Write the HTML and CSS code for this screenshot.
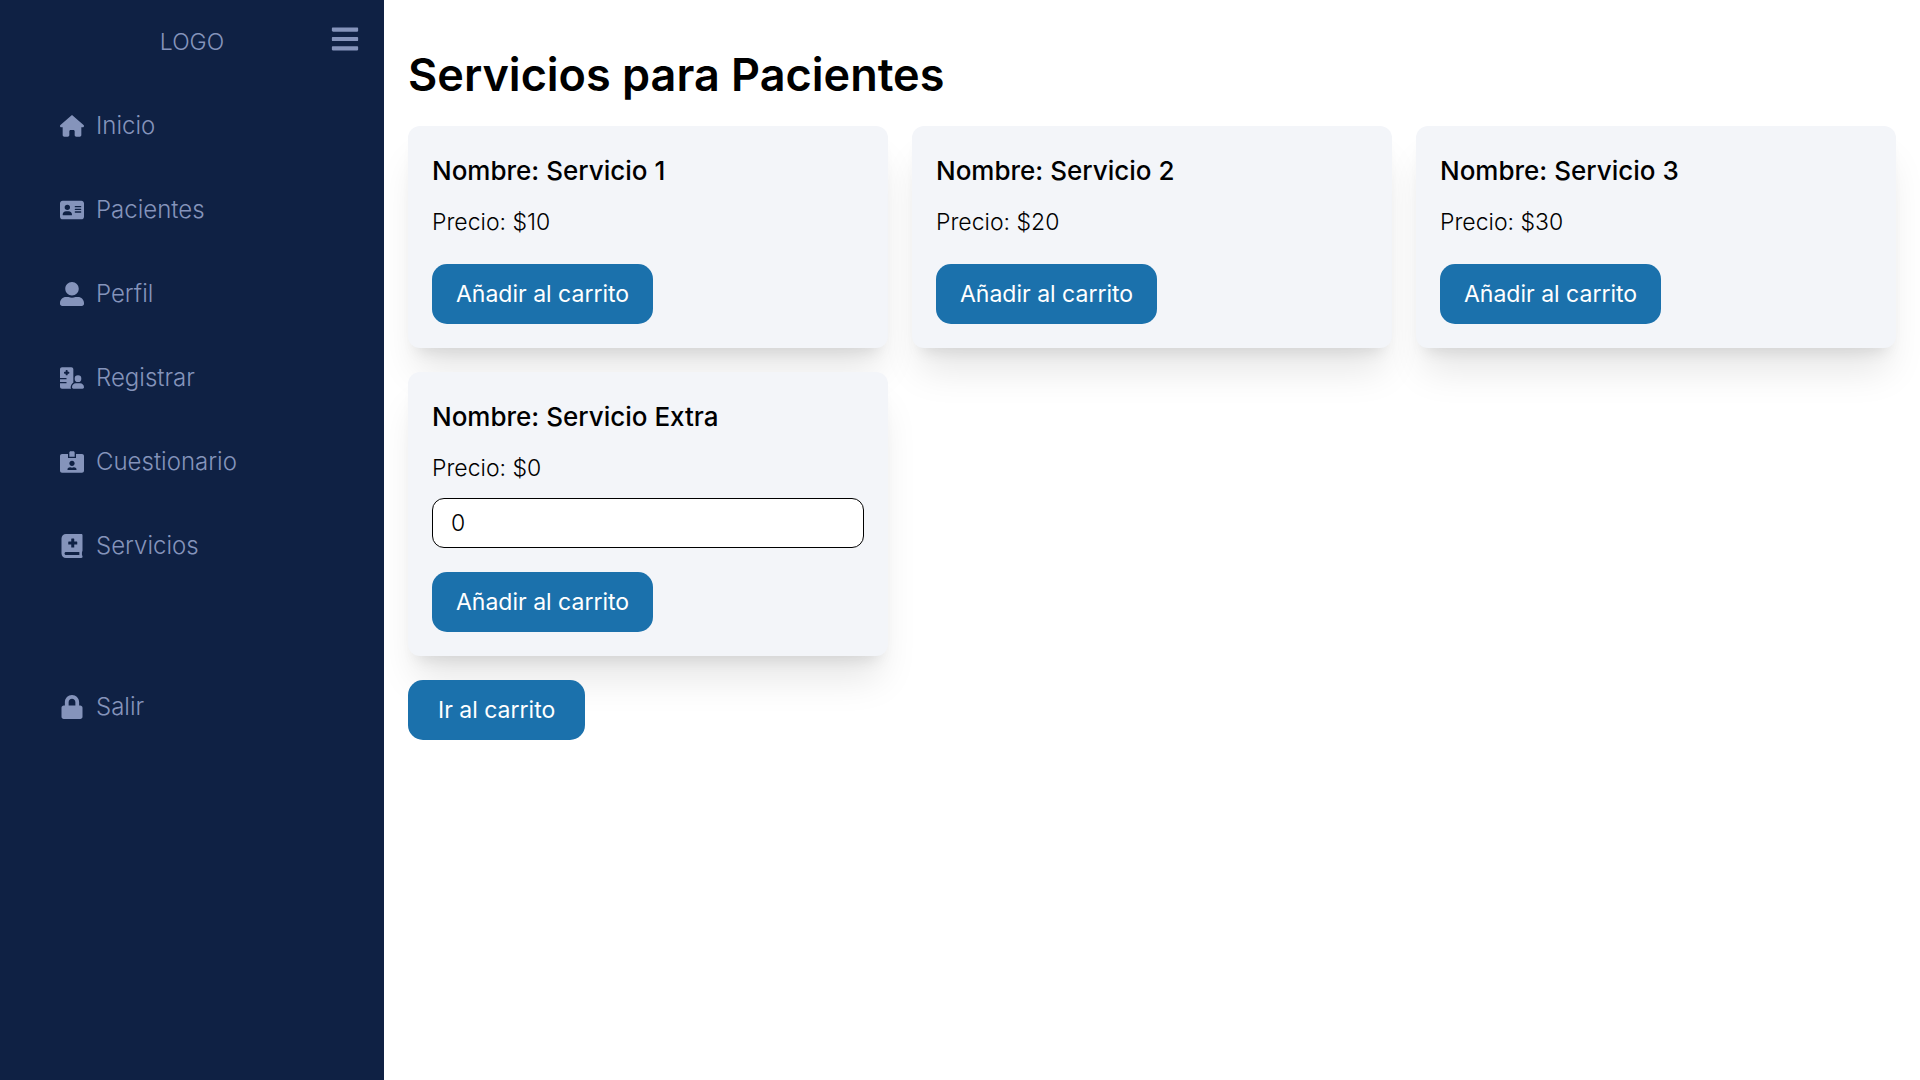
FILE: index.html
```html
<!DOCTYPE html>
<html lang="es">
<head>
  <meta charset="utf-8">
  <meta name="viewport" content="width=device-width, initial-scale=1">
  <title>Servicios para Pacientes</title>
  <link rel="stylesheet" href="styles.css">
</head>
<body>
  <div class="layout">
    <aside class="sidebar">
      <header class="sidebar-header">
        <span class="logo">LOGO</span>
        <button class="menu-toggle" type="button" aria-label="Menú">
          <svg class="menu-icon" viewBox="0 0 448 512" aria-hidden="true"><path d="M16 132h416c8.837 0 16-7.163 16-16V76c0-8.837-7.163-16-16-16H16C7.163 60 0 67.163 0 76v40c0 8.837 7.163 16 16 16zm0 160h416c8.837 0 16-7.163 16-16v-40c0-8.837-7.163-16-16-16H16c-8.837 0-16 7.163-16 16v40c0 8.837 7.163 16 16 16zm0 160h416c8.837 0 16-7.163 16-16v-40c0-8.837-7.163-16-16-16H16c-8.837 0-16 7.163-16 16v40c0 8.837 7.163 16 16 16z"/></svg>
        </button>
      </header>
      <nav class="nav">
        <a class="nav-link" href="#inicio">
          <svg class="nav-icon" viewBox="0 0 576 512" aria-hidden="true"><path d="M575.8 255.5c0 18-15 32.1-32 32.1h-32l.7 160.2c0 2.7-.2 5.4-.5 8.1V472c0 22.1-17.9 40-40 40H456c-1.1 0-2.2 0-3.3-.1c-1.4 .1-2.8 .1-4.2 .1H416 392c-22.1 0-40-17.9-40-40V448 384c0-17.7-14.3-32-32-32H256c-17.7 0-32 14.3-32 32v64 24c0 22.1-17.9 40-40 40H160 128.1c-1.5 0-3-.1-4.5-.2c-1.2 .1-2.4 .2-3.6 .2H104c-22.1 0-40-17.9-40-40V360c0-.9 0-1.9 .1-2.8V287.6H32c-18 0-32-14-32-32.1c0-9 3-17 10-24L266.4 8c7-7 15-8 22-8s15 2 21 7L564.8 231.5c8 7 12 15 11 24z"/></svg>
          Inicio
        </a>
        <a class="nav-link" href="#pacientes">
          <svg class="nav-icon" viewBox="0 0 576 512" aria-hidden="true"><path d="M64 32C28.7 32 0 60.7 0 96V416c0 35.3 28.7 64 64 64H512c35.3 0 64-28.7 64-64V96c0-35.3-28.7-64-64-64H64zm80 256h64c44.2 0 80 35.8 80 80c0 8.8-7.2 16-16 16H80c-8.8 0-16-7.2-16-16c0-44.2 35.8-80 80-80zm-32-96a64 64 0 1 1 128 0 64 64 0 1 1 -128 0zm256-32H496c8.8 0 16 7.2 16 16s-7.2 16-16 16H368c-8.8 0-16-7.2-16-16s7.2-16 16-16zm0 64H496c8.8 0 16 7.2 16 16s-7.2 16-16 16H368c-8.8 0-16-7.2-16-16s7.2-16 16-16zm0 64H496c8.8 0 16 7.2 16 16s-7.2 16-16 16H368c-8.8 0-16-7.2-16-16s7.2-16 16-16z"/></svg>
          Pacientes
        </a>
        <a class="nav-link" href="#perfil">
          <svg class="nav-icon" viewBox="0 0 512 512" aria-hidden="true"><path d="M256 288c79.5 0 144-64.5 144-144S335.5 0 256 0 112 64.5 112 144s64.500 144 144 144zm128 32h-55.100c-22.200 10.200-46.900 16-72.900 16s-50.600-5.800-72.900-16H128C57.300 320 0 377.300 0 448v16c0 26.500 21.500 48 48 48h416c26.500 0 48-21.500 48-48v-16c0-70.700-57.300-128-128-128z"/></svg>
          Perfil
        </a>
        <a class="nav-link" href="#registrar">
          <svg class="nav-icon" viewBox="0 0 576 512" aria-hidden="true"><path d="M48 0C21.500 0 0 21.500 0 48V256H144c8.800 0 16 7.200 16 16s-7.200 16-16 16H0v64H144c8.800 0 16 7.200 16 16s-7.200 16-16 16H0v80c0 26.500 21.500 48 48 48H265.900c-6.300-10.200-9.900-22.200-9.900-35.100c0-46.900 25.800-87.800 64-109.200V271.800 48c0-26.500-21.500-48-48-48H48zM152 64h16c8.800 0 16 7.200 16 16v24h24c8.800 0 16 7.200 16 16v16c0 8.800-7.200 16-16 16H184v24c0 8.800-7.200 16-16 16H152c-8.800 0-16-7.200-16-16V152H112c-8.800 0-16-7.200-16-16V120c0-8.800 7.200-16 16-16h24V80c0-8.800 7.200-16 16-16zM512 272a80 80 0 1 0 -160 0 80 80 0 1 0 160 0zM288 477.100c0 19.300 15.600 34.900 34.900 34.900H541.100c19.300 0 34.900-15.600 34.900-34.900c0-51.400-41.700-93.100-93.100-93.100H381.100c-51.400 0-93.100 41.700-93.100 93.100z"/></svg>
          Registrar
        </a>
        <a class="nav-link" href="#cuestionario">
          <svg class="nav-icon" viewBox="0 0 576 512" aria-hidden="true"><path d="M528 64H384v96H192V64H48C21.500 64 0 85.500 0 112v352c0 26.500 21.500 48 48 48h480c26.500 0 48-21.500 48-48V112c0-26.500-21.500-48-48-48zM288 224c35.300 0 64 28.700 64 64s-28.700 64-64 64-64-28.700-64-64 28.700-64 64-64zm93.300 224H194.700c-10.400 0-18.800-10-15.600-19.800 8.300-25.600 32.400-44.200 60.900-44.200h8.200c12.300 5.100 25.700 8 39.800 8s27.600-2.900 39.800-8h8.200c28.400 0 52.500 18.500 60.900 44.200 3.200 9.900-5.200 19.800-15.600 19.800zM352 32c0-17.700-14.300-32-32-32h-64c-17.700 0-32 14.300-32 32v96h128V32z"/></svg>
          Cuestionario
        </a>
        <a class="nav-link" href="#servicios">
          <svg class="nav-icon" viewBox="0 0 448 512" aria-hidden="true"><path d="M448 358.400V25.600c0-16-9.600-25.600-25.600-25.600H96C41.600 0 0 41.600 0 96v320c0 54.400 41.600 96 96 96h326.400c12.800 0 25.600-9.600 25.600-25.600v-16c0-6.400-3.200-12.800-9.600-19.200-3.200-16-3.200-60.800 0-73.600 6.400-3.200 9.600-9.600 9.600-19.200zM144 168a8 8 0 0 1 8-8h56v-56a8 8 0 0 1 8-8h48a8 8 0 0 1 8 8v56h56a8 8 0 0 1 8 8v48a8 8 0 0 1-8 8h-56v56a8 8 0 0 1-8 8h-48a8 8 0 0 1-8-8v-56h-56a8 8 0 0 1-8-8zm236.800 280H96c-16 0-32-12.800-32-32s12.800-32 32-32h284.800z"/></svg>
          Servicios
        </a>
        <a class="nav-link nav-link-exit" href="#salir">
          <svg class="nav-icon" viewBox="0 0 448 512" aria-hidden="true"><path d="M400 224h-24v-72C376 68.200 307.800 0 224 0S72 68.200 72 152v72H48c-26.500 0-48 21.500-48 48v192c0 26.500 21.500 48 48 48h352c26.500 0 48-21.500 48-48V272c0-26.500-21.500-48-48-48zm-104 0H152v-72c0-39.700 32.300-72 72-72s72 32.300 72 72v72z"/></svg>
          Salir
        </a>
      </nav>
    </aside>

    <main class="content">
      <h1 class="title">Servicios para Pacientes</h1>
      <div class="services">
        <article class="card">
          <h2 class="card-name">Nombre: Servicio 1</h2>
          <p class="card-price">Precio: $10</p>
          <button class="button" type="button">Añadir al carrito</button>
        </article>
        <article class="card">
          <h2 class="card-name">Nombre: Servicio 2</h2>
          <p class="card-price">Precio: $20</p>
          <button class="button" type="button">Añadir al carrito</button>
        </article>
        <article class="card">
          <h2 class="card-name">Nombre: Servicio 3</h2>
          <p class="card-price">Precio: $30</p>
          <button class="button" type="button">Añadir al carrito</button>
        </article>
        <article class="card">
          <h2 class="card-name">Nombre: Servicio Extra</h2>
          <label class="card-price" for="precio-extra">Precio: $0</label>
          <input class="price-input" id="precio-extra" type="number" value="0">
          <button class="button" type="button">Añadir al carrito</button>
        </article>
      </div>
      <button class="button button-cart" type="button">Ir al carrito</button>
    </main>
  </div>
</body>
</html>
```
FILE: styles.css
```css
*,
*::before,
*::after {
  box-sizing: border-box;
}

body {
  margin: 0;
  background: #fff;
  color: #000;
  font-family: Inter, "Open Sans", sans-serif;
  font-size: 23px;
  font-weight: 300;
  line-height: 36px;
}

h1,
h2,
p {
  margin: 0;
}

button,
input {
  font: inherit;
}

.layout {
  display: grid;
  grid-template-columns: 1fr 4fr;
  min-height: 100vh;
}

/* Sidebar */
.sidebar {
  position: relative;
  z-index: 1;
  background: #0f2144;
  color: #8594bb;
}

.sidebar-header {
  display: grid;
  grid-template-columns: 1fr auto 1fr;
  align-items: start;
  height: 84px;
  padding: 24px;
}

.logo {
  grid-column: 2;
}

.menu-toggle {
  justify-self: end;
  padding: 0;
  border: 0;
  background: none;
  color: inherit;
  cursor: pointer;
}

.menu-icon {
  display: block;
  width: 30px;
  height: 30px;
  fill: currentColor;
}

.nav {
  display: flex;
  flex-direction: column;
  font-size: 24px;
}

.nav-link {
  display: flex;
  align-items: center;
  gap: 12px;
  padding: 24px 60px;
  color: inherit;
  text-decoration: none;
}

.nav-link-exit {
  margin-top: 77px;
}

.nav-icon {
  width: 24px;
  height: 24px;
  fill: currentColor;
}

/* Services */
.content {
  padding: 48px 24px 24px;
}

.title {
  margin-bottom: 24px;
  font-size: 45px;
  font-weight: 600;
  line-height: 54px;
}

.services {
  display: grid;
  grid-template-columns: repeat(3, 1fr);
  gap: 24px;
}

.card {
  padding: 24px;
  border-radius: 12px;
  background: #f3f5f9;
  box-shadow:
    0 30px 38px -8px rgba(0, 0, 0, 0.1),
    0 12px 15px -9px rgba(0, 0, 0, 0.1);
}

.card-name {
  margin-bottom: 12px;
  font-size: 26px;
  font-weight: 500;
  line-height: 42px;
}

.card-price {
  display: block;
}

.price-input {
  display: block;
  width: 100%;
  height: 50px;
  margin-top: 12px;
  padding: 0 18px;
  border: 1px solid #000;
  border-radius: 12px;
  background: #fff;
  color: inherit;
}

.button {
  display: block;
  position: relative;
  height: 60px;
  margin-top: 24px;
  padding: 0 24px;
  border: 0;
  border-radius: 15px;
  background: #1b71ac;
  color: #fff;
  font-weight: 400;
  cursor: pointer;
}

.button-cart {
  padding: 0 30px;
}
```
